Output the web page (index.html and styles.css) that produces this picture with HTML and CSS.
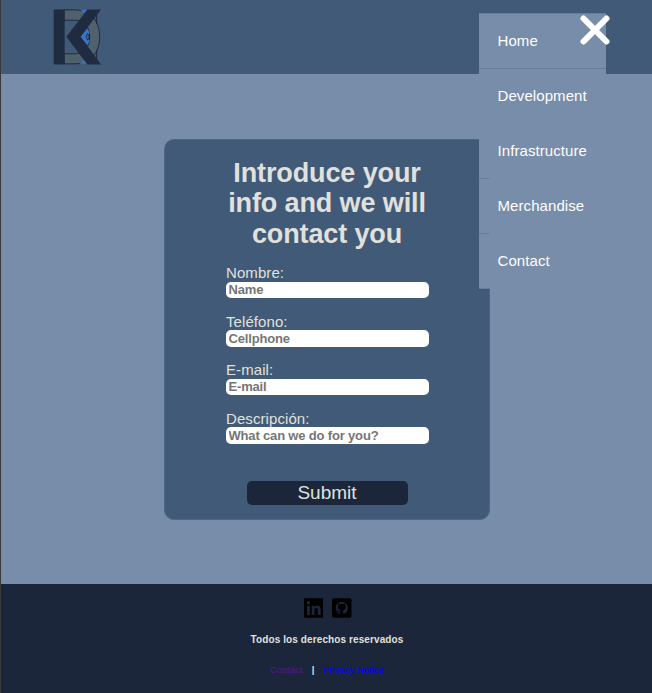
FILE: index.html
```html
<!DOCTYPE html>
<html lang="es">
<head>
<meta charset="utf-8">
<title>Contact</title>
<link rel="stylesheet" href="styles.css">
</head>
<body>
<header class="header">
  <svg class="logo" viewBox="36 25.500 150 174">
    <path d="M72 28H104C154 28 179 64 179 109S154 190 104 190H72V160H102C134 160 149 138 149 109S134 59 102 59H72Z" fill="#4f616d" stroke="#17202f" stroke-width="2.500"/>
    <path d="M122 28H170V44L150 56ZM118 190H170V178L150 166ZM121 109L143 85L149 98L141 109L149 120L143 133Z" fill="#3975c8"/>
    <path d="M170 28V70M170 150V190M143 99L149 109L143 119L138 109Z" fill="none" stroke="#17202f" stroke-width="2.500"/>
    <path d="M44 27H74V192H44Q41 192 41 189V30Q41 27 44 27ZM142 27H183L122 109L183 192H142L79 109Z" fill="#1f2b41"/>
  </svg>
  <nav class="menu">
    <a class="menu-item">Home</a>
    <a class="menu-item">Development</a>
    <a class="menu-item">Infrastructure</a>
    <a class="menu-item">Merchandise</a>
    <a class="menu-item">Contact</a>
  </nav>
  <svg class="close" viewBox="0 0 32 32"><path d="M4.500 4.500L27.500 27.500M27.500 4.500L4.500 27.500"/></svg>
</header>
<main class="main">
  <form class="form">
    <h1 class="title">Introduce your info and we will contact you</h1>
    <label class="field">Nombre:<input class="input" placeholder="Name"></label>
    <label class="field">Teléfono:<input class="input" placeholder="Cellphone"></label>
    <label class="field">E-mail:<input class="input" placeholder="E-mail"></label>
    <label class="field">Descripción:<input class="input" placeholder="What can we do for you?"></label>
    <button class="submit" type="button">Submit</button>
  </form>
</main>
<footer class="footer">
  <div class="social">
    <svg class="icon" viewBox="0 0 448 448"><path fill-rule="evenodd" d="M416 0H32C14 0 0 15 0 32V416C0 433 14 448 32 448H416C434 448 448 433 448 416V32C448 15 434 0 416 0ZM135 384H69V170H135ZM102 141A38 38 0 1 1 102 64A38 38 0 0 1 102 141ZM384 384H318V280C318 255 317 223 283 223C248 223 243 250 243 278V384H177V170H240V199H241C250 182 272 165 304 165C371 165 384 209 384 267Z"/></svg>
    <svg class="icon" viewBox="0 0 448 448"><rect width="448" height="448" rx="44"/><path fill="#1b263b" fill-rule="evenodd" d="M224 84C142 84 84 142 84 222C84 288 119 338 171 358C182 362 188 356 188 346V324C148 330 134 308 126 292C120 282 112 277 112 277C97 266 114 266 114 266C132 268 141 283 141 283C156 310 181 302 190 296C192 285 196 278 203 273C166 269 134 254 134 201C134 184 140 172 149 162C146 156 142 141 151 119C165 114 191 137 191 137C214 130 235 130 258 137C258 137 283 114 297 119C306 141 302 156 299 162C309 172 316 184 316 201C316 254 281 269 245 273C251 278 256 288 256 304V346C256 356 263 362 274 358C328 338 364 288 364 222C364 142 306 84 224 84Z"/></svg>
  </div>
  <p class="rights">Todos los derechos reservados</p>
  <div class="links"><a class="visited">Contact</a><span class="bar">|</span><a class="privacy">Privacy Notice</a></div>
</footer>
</body>
</html>
```
FILE: styles.css
```css
* { box-sizing: border-box; }
body {
  margin: 0;
  height: 693px;
  overflow: hidden;
  display: flex;
  flex-direction: column;
  border-left: 1px solid #3a3a3a;
  background: #778da9;
  color: #e0e1dd;
  font-family: "Liberation Sans", Arial, sans-serif;
}
.header {
  position: relative;
  height: 74px;
  flex: none;
  padding: 8.500px 0 0 51px;
  background: #415a77;
}
.logo { display: block; width: 50px; height: 58px; }
.menu {
  position: absolute;
  z-index: 2;
  top: 13px;
  left: 478px;
  width: 127px;
  border-bottom: 1px solid rgba(119, 141, 169, .7);
}
.menu-item {
  display: block;
  height: 55px;
  padding-left: 18.500px;
  border-top: 1px solid rgba(119, 141, 169, .7);
  background: #778da9;
  background-clip: padding-box;
  color: #fff;
  font-size: 15px;
  letter-spacing: .08px;
  line-height: 54px;
}
.close {
  position: absolute;
  z-index: 3;
  top: 13.500px;
  left: 578px;
  width: 32px;
  height: 32px;
  fill: none;
  stroke: #fff;
  stroke-width: 6;
  stroke-linecap: round;
}
.main { height: 510px; flex: none; padding: 65px 0 0 163px; }
.form {
  width: 326px;
  height: 380.500px;
  padding: 17.500px 61px 0;
  border: 1px solid #4d6682;
  border-radius: 10px;
  background: #415a77;
}
.title {
  margin: 0 -1px 15px;
  font-size: 27px;
  letter-spacing: -.12px;
  line-height: 30.500px;
  text-align: center;
}
.field {
  display: block;
  height: 48.600px;
  font-size: 15px;
  letter-spacing: .08px;
  line-height: 17px;
}
.input {
  display: block;
  width: 203px;
  height: 16.500px;
  margin: .5px 0 0 0;
  padding: 0 2.500px;
  border: 0;
  border-radius: 5px;
  background: #fff;
  font: bold 13px/15px "Liberation Sans", Arial, sans-serif;
  letter-spacing: -.17px;
}
.input::placeholder { color: #757575; }
.submit {
  display: block;
  width: 161px;
  height: 24px;
  margin: 23px auto 0;
  padding: 0;
  border: 0;
  border-radius: 5px;
  background: #1b263b;
  color: #e0e1dd;
  font: 19px/24px "Liberation Sans", Arial, sans-serif;
}
.footer { flex: 1; padding-top: 14px; background: #1b263b; text-align: center; }
.social { display: flex; justify-content: center; gap: 9px; padding-left: 2px; }
.icon { width: 19.500px; height: 20px; }
.rights { margin: 16px 0 0; padding-left: 1px; font-size: 10px; font-weight: bold; line-height: 12px; letter-spacing: .1px; }
.links {
  display: flex;
  justify-content: center;
  gap: 9px;
  margin-top: 18px;
  padding-left: 1px;
  font-size: 9.500px;
  line-height: 12px;
}
.visited { color: #551a8b; }
.privacy { color: #00f; }
.bar { font-weight: bold; }
```
